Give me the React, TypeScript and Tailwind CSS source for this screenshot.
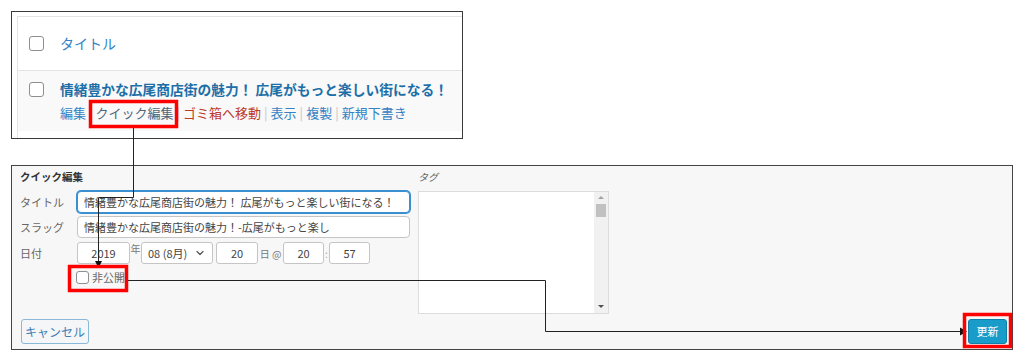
import { ChevronDown } from 'lucide-react';

function Box({ size = 'w-[15px] h-[15px]' }: { size?: string }) {
  return <span className={`${size} shrink-0 border border-[#8c8f94] rounded-[3px] bg-white`}></span>;
}

function Sep() {
  return <span className="text-[#c3c4c7] mx-[3px]">|</span>;
}

export default function App() {
  return (
    <div className="relative w-[1024px] h-[364px] bg-white overflow-hidden font-['Noto_Sans_CJK_JP','Noto_Sans',sans-serif]">
      {/* post list row */}
      <div className="ml-[11px] mt-[11px] w-[452px] h-[128px] border border-[#3a3a3a] overflow-hidden">
        <div className="ml-[5px] mt-[4px] h-full border-l border-t border-[#e2e4e7]">
          <div className="h-[54px] flex items-center pl-[11px] border-b border-[#e2e4e7]">
            <Box />
            <span className="ml-[16px] text-[14px] text-[#3582c4]">タイトル</span>
          </div>
          <div className="h-[60px] bg-[#f9f9f9] flex pl-[11px] pt-[11px]">
            <Box />
            <div className="ml-[16px] -mt-[3px]">
              <div className="text-[13.75px] leading-[20px] font-bold text-[#1d6fa8] whitespace-nowrap">
                情緒豊かな広尾商店街の魅力！ 広尾がもっと楽しい街になる！
              </div>
              <div className="mt-[5px] text-[13px] leading-[18px] whitespace-nowrap">
                <span className="text-[#3582c4]">編集</span>
                <Sep />
                <span className="text-[#4f6578]">クイック編集</span>
                <Sep />
                <span className="text-[#c0392b]">ゴミ箱へ移動</span>
                <Sep />
                <span className="text-[#3582c4]">表示</span>
                <Sep />
                <span className="text-[#3582c4]">複製</span>
                <Sep />
                <span className="text-[#3582c4]">新規下書き</span>
              </div>
            </div>
          </div>
        </div>
      </div>

      {/* quick edit panel */}
      <div className="ml-[11px] mt-[26px] w-[1002px] h-[185px] border border-[#444] bg-[#f7f7f7] flex flex-col">
        <div className="flex h-[147px]">
          <div className="w-[398px] pl-[8px]">
            <div className="pt-[3px] h-[19px] text-[10.5px] leading-[16px] font-bold text-[#333]">クイック編集</div>
            <div className="mt-[6px] flex items-center h-[22px]">
              <span className="w-[57px] text-[11px] text-[#666]">タイトル</span>
              <div className="w-[333px] h-[22px] border border-[#3a8fd0] shadow-[0_0_0_1px_#3a8fd0] rounded-[4px] bg-white flex items-center px-[6px] text-[11px] text-[#444] whitespace-nowrap overflow-hidden">
                情緒豊かな広尾商店街の魅力！ 広尾がもっと楽しい街になる！
              </div>
            </div>
            <div className="mt-[3px] flex items-center h-[22px]">
              <span className="w-[57px] text-[11px] text-[#666]">スラッグ</span>
              <div className="w-[333px] h-[22px] border border-[#c5c5c5] rounded-[4px] bg-white flex items-center px-[6px] text-[11px] text-[#444] whitespace-nowrap overflow-hidden">
                情緒豊かな広尾商店街の魅力！-広尾がもっと楽し
              </div>
            </div>
            <div className="mt-[4px] flex items-center h-[22px] text-[11px] text-[#444]">
              <span className="w-[57px] text-[#666]">日付</span>
              <div className="w-[53px] h-[22px] border border-[#c5c5c5] rounded-[3px] bg-white flex items-center justify-center">2019</div>
              <span className="w-[11px] text-center text-[10px] text-[#777] self-start -mt-[1px]">年</span>
              <div className="w-[72px] h-[22px] border border-[#c5c5c5] rounded-[3px] bg-white flex items-center justify-between pl-[6px] pr-[6px]">
                <span>08 (8月)</span>
                <ChevronDown size={12} strokeWidth={2.5} className="text-[#555]" />
              </div>
              <div className="ml-[3px] w-[42px] h-[22px] border border-[#c5c5c5] rounded-[3px] bg-white flex items-center justify-center">20</div>
              <span className="w-[25px] text-center text-[10px] text-[#777] whitespace-nowrap">日 @</span>
              <div className="w-[41px] h-[22px] border border-[#c5c5c5] rounded-[3px] bg-white flex items-center justify-center">20</div>
              <span className="w-[5px] text-center text-[10px] text-[#aaa]">:</span>
              <div className="w-[41px] h-[22px] border border-[#c5c5c5] rounded-[3px] bg-white flex items-center justify-center">57</div>
            </div>
            <div className="mt-[7px] flex items-center h-[13px] pl-[56px]">
              <Box size="w-[13px] h-[13px]" />
              <span className="ml-[3px] text-[11px] text-[#666]">非公開</span>
            </div>
          </div>
          <div className="ml-[8px]">
            <div className="pt-[3px] h-[19px] text-[10px] leading-[16px] italic text-[#666]">タグ</div>
            <div className="mt-[6px] w-[191px] h-[123px] border border-[#dcdcdc] bg-white flex justify-end">
              <div className="w-[14px] h-full bg-[#f1f1f1] flex flex-col items-center">
                <span className="mt-[4px] w-0 h-0 border-l-[3px] border-r-[3px] border-b-[3px] border-l-transparent border-r-transparent border-b-[#a3a3a3]"></span>
                <span className="mt-[5px] w-[10px] h-[13px] bg-[#c1c1c1]"></span>
                <span className="mt-auto mb-[5px] w-0 h-0 border-l-[3px] border-r-[3px] border-t-[3px] border-l-transparent border-r-transparent border-t-[#505050]"></span>
              </div>
            </div>
          </div>
        </div>
        <div className="mt-[6px] flex items-center justify-between pl-[9px] pr-[5px]">
          <button className="w-[68px] h-[25px] border border-[#8ab8d9] rounded-[3px] bg-[#f4f6f8] text-[12px] text-[#3d7fb5]">キャンセル</button>
          <button className="w-[39px] h-[25px] border border-[#0e7fa9] rounded-[3px] bg-[#1a9ccb] text-[11px] text-white">更新</button>
        </div>
      </div>

      {/* annotations */}
      <svg className="absolute left-0 top-0 pointer-events-none" width="1024" height="364" viewBox="0 0 1024 364">
        <path d="M133.5 128 V197.5 H98.5 V262" fill="none" stroke="#222" strokeWidth="1" />
        <polygon points="95,261 102,261 98.5,268" fill="#111" />
        <path d="M128 280.5 H545.5 V331.5 H961" fill="none" stroke="#222" strokeWidth="1" />
        <polygon points="960,327.5 967,331.5 960,335.5" fill="#111" />
        <rect x="90.5" y="101.5" width="86" height="25" fill="none" stroke="#ff0000" strokeWidth="3.5" />
        <rect x="69.5" y="266.5" width="57" height="24" fill="none" stroke="#ff0000" strokeWidth="3.5" />
        <rect x="964.5" y="314.5" width="46" height="32" fill="none" stroke="#ff0000" strokeWidth="3.5" />
      </svg>
    </div>
  );
}
